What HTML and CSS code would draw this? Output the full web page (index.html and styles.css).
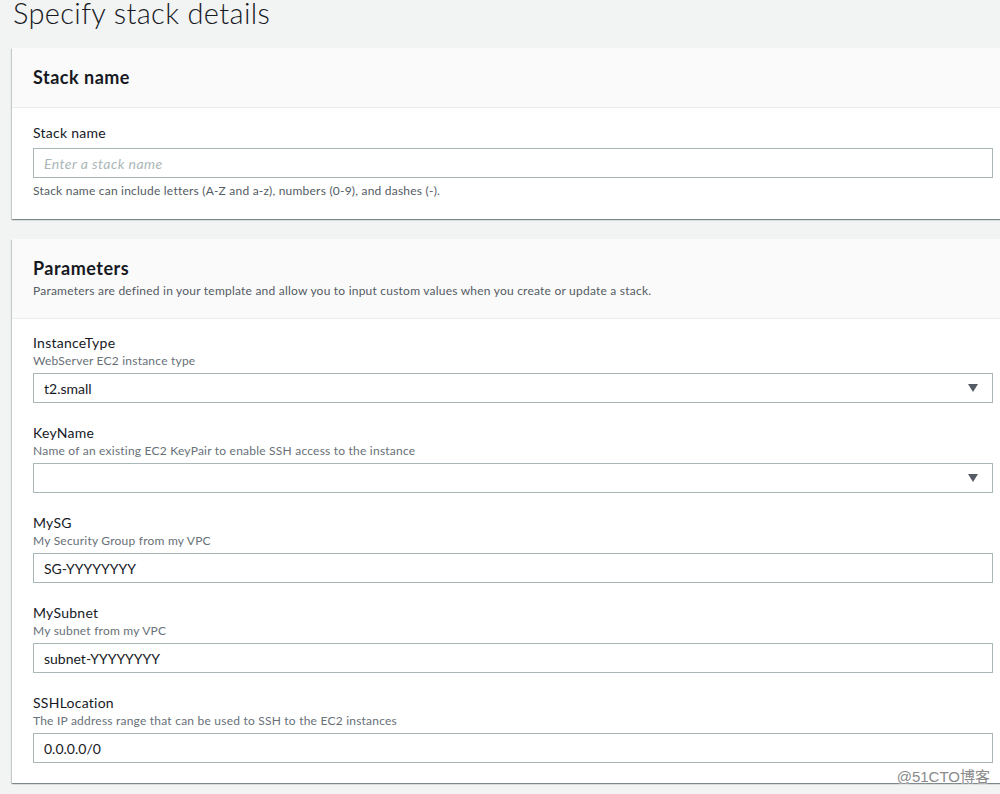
FILE: index.html
```html
<!DOCTYPE html>
<html>
<head>
<meta charset="utf-8">
<link rel="stylesheet" href="styles.css">
</head>
<body>
<div class="page">
  <h1 class="title">Specify stack details</h1>

  <section class="card">
    <div class="card-head">
      <h2 class="card-title">Stack name</h2>
    </div>
    <div class="card-body">
      <div class="field">
        <label class="label label-tight">Stack name</label>
        <div class="input"><span class="placeholder">Enter a stack name</span></div>
        <div class="hint">Stack name can include letters (A-Z and a-z), numbers (0-9), and dashes (-).</div>
      </div>
    </div>
  </section>

  <section class="card">
    <div class="card-head">
      <h2 class="card-title">Parameters</h2>
      <div class="card-desc">Parameters are defined in your template and allow you to input custom values when you create or update a stack.</div>
    </div>
    <div class="card-body params">
      <div class="field">
        <div class="label">InstanceType</div>
        <div class="desc">WebServer EC2 instance type</div>
        <div class="input select"><span class="value">t2.small</span><span class="caret"></span></div>
      </div>
      <div class="field">
        <div class="label">KeyName</div>
        <div class="desc">Name of an existing EC2 KeyPair to enable SSH access to the instance</div>
        <div class="input select"><span class="value"></span><span class="caret"></span></div>
      </div>
      <div class="field">
        <div class="label">MySG</div>
        <div class="desc">My Security Group from my VPC</div>
        <div class="input"><span class="value">SG-YYYYYYYY</span></div>
      </div>
      <div class="field">
        <div class="label">MySubnet</div>
        <div class="desc">My subnet from my VPC</div>
        <div class="input"><span class="value">subnet-YYYYYYYY</span></div>
      </div>
      <div class="field">
        <div class="label">SSHLocation</div>
        <div class="desc">The IP address range that can be used to SSH to the EC2 instances</div>
        <div class="input"><span class="value">0.0.0.0/0</span></div>
      </div>
    </div>
  </section>
</div>
<div class="watermark">@51CTO博客</div>
</body>
</html>
```

FILE: styles.css
```css
html, body {
  margin: 0;
  padding: 0;
  overflow: hidden;
  background: #f2f3f3;
}
body {
  font-family: Lato, "Liberation Sans", sans-serif;
  color: #16191f;
  width: 1000px;
  height: 794px;
  position: relative;
}
.page {
  width: 1001px;
  padding-left: 12px;
  display: flex;
  flex-direction: column;
  gap: 20px;
}
.title {
  margin: 0 0 0 1px;
  height: 28px;
  font-size: 29px;
  line-height: 26px;
  font-weight: 300;
  color: #16191f;
  letter-spacing: 0.35px;
}
.card {
  background: #fff;
  box-shadow: 0 1px 1px 0 rgba(0, 28, 36, 0.3), 1px 1px 1px 0 rgba(0, 28, 36, 0.15), -1px 1px 1px 0 rgba(0, 28, 36, 0.15);
}
.card-head {
  background: #fafafa;
  border-bottom: 1px solid #eaeded;
  padding: 18px 20px 19px 21px;
}
.card-title {
  margin: 0;
  font-size: 18px;
  line-height: 22px;
  font-weight: 700;
  letter-spacing: 0.5px;
}
.card-desc {
  font-size: 12px;
  line-height: 16px;
  margin-top: 4px;
  color: #545b64;
  letter-spacing: 0.22px;
}
.card-body {
  padding: 15px 20px 20px 21px;
}
.params {
  padding-top: 14px;
  display: flex;
  flex-direction: column;
  gap: 20px;
}
.label {
  font-size: 14px;
  line-height: 19px;
  letter-spacing: 0.25px;
}
.label-tight {
  display: block;
  line-height: 20px;
  margin-bottom: 5px;
}
.desc {
  font-size: 12px;
  line-height: 16px;
  color: #687078;
  margin-top: 1px;
  margin-bottom: 4px;
  letter-spacing: 0.22px;
}
.input {
  height: 30px;
  box-sizing: border-box;
  border: 1px solid #aab7b8;
  background: #fff;
  display: flex;
  align-items: center;
  padding: 0 10px;
  font-size: 14px;
}
.placeholder {
  color: #aab7b8;
  font-style: italic;
  letter-spacing: 0.45px;
}
.value {
  flex: 1;
}
.caret {
  width: 0;
  height: 0;
  border-left: 5px solid transparent;
  border-right: 5px solid transparent;
  border-top: 8px solid #545b64;
  margin-right: 4px;
}
.hint {
  font-size: 12px;
  line-height: 16px;
  color: #545b64;
  margin-top: 5px;
  letter-spacing: 0.22px;
}
.watermark {
  position: absolute;
  right: 10px;
  bottom: 8px;
  font-family: "Liberation Sans", "Noto Sans CJK SC", sans-serif;
  font-size: 15px;
  color: #8a8a8a;
  text-shadow: 0 0 2px #fff, 0 0 2px #fff;
}
```
